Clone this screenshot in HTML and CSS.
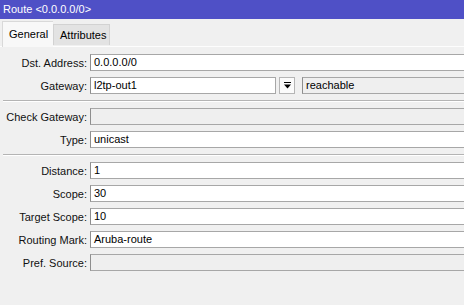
FILE: index.html
```html
<!DOCTYPE html>
<html>
<head>
<meta charset="utf-8">
<link rel="stylesheet" href="styles.css">
</head>
<body>
<div class="window">
  <div class="titlebar">Route &lt;0.0.0.0/0&gt;</div>
  <div class="tabs">
    <div class="tab active">General</div>
    <div class="tab">Attributes</div>
  </div>
  <div class="panel">
    <div class="form">
      <label class="lbl">Dst. Address:</label>
      <div class="field">0.0.0.0/0</div>

      <label class="lbl">Gateway:</label>
      <div class="gw-row">
        <div class="field gw">l2tp-out1</div>
        <div class="dd-btn">
          <svg width="7" height="7" viewBox="0 0 7 7"><rect x="0" y="0" width="7" height="1" fill="#000"/><path d="M0 2.5 H7 L3.5 6.5 Z" fill="#000"/></svg>
        </div>
        <div class="field ro">reachable</div>
      </div>

      <div class="sep"></div>

      <label class="lbl">Check Gateway:</label>
      <div class="field ro"></div>

      <label class="lbl">Type:</label>
      <div class="field">unicast</div>

      <div class="sep"></div>

      <label class="lbl">Distance:</label>
      <div class="field">1</div>

      <label class="lbl">Scope:</label>
      <div class="field">30</div>

      <label class="lbl">Target Scope:</label>
      <div class="field">10</div>

      <label class="lbl">Routing Mark:</label>
      <div class="field">Aruba-route</div>

      <label class="lbl">Pref. Source:</label>
      <div class="field ro"></div>
    </div>
  </div>
</div>
</body>
</html>
```

FILE: styles.css
```css
html, body {
  margin: 0;
  padding: 0;
  background: #f0f0f0;
  overflow: hidden;
  width: 464px;
  height: 305px;
}
.window {
  font-family: "Liberation Sans", Arial, sans-serif;
  font-size: 11px;
  color: #000;
  width: 480px;
}
.titlebar {
  height: 19px;
  line-height: 19px;
  background: #4f50c6;
  color: #fff;
  padding-left: 3px;
  font-size: 11px;
}
.tabs {
  display: flex;
  align-items: flex-end;
  height: 27px;
  padding-left: 2px;
  position: relative;
  z-index: 1;
}
.tab {
  height: 21px;
  line-height: 21px;
  padding: 0 6px;
  background: #e3e3e3;
  border: 1px solid #d2d2d2;
  border-bottom: none;
  margin-bottom: 1px;
  box-sizing: border-box;
  width: 57px;
  text-align: center;
}
.tab.active {
  height: 26px;
  line-height: 24px;
  width: 51px;
  background: #f8f8f8;
  border-color: #d9d9d9;
  margin-bottom: -1px;
  border-right: none;
}
.panel {
  border-top: 1px solid #fdfdfd;
  padding-top: 7px;
}
.form {
  display: grid;
  grid-template-columns: 87px 1fr;
  column-gap: 3px;
  row-gap: 6px;
  align-items: center;
}
.lbl {
  text-align: right;
  white-space: nowrap;
  color: #111;
}
.field {
  height: 17px;
  box-sizing: border-box;
  border: 1px solid #a7a7a7;
  border-left-color: #8e8e8e;
  background: #fff;
  padding-left: 3px;
  line-height: 15px;
  white-space: nowrap;
}
.field.ro {
  background: #efefef;
}
.gw-row {
  display: flex;
  align-items: center;
}
.field.gw {
  flex: 0 0 186px;
}
.dd-btn {
  flex: 0 0 16px;
  height: 17px;
  box-sizing: border-box;
  border: 1px solid #b5b5b5;
  background: #fbfbfb;
  margin-left: 3px;
  display: flex;
  align-items: center;
  justify-content: center;
}
.gw-row .field.ro {
  flex: 1;
  margin-left: 7px;
}
.sep {
  grid-column: 1 / -1;
  height: 0;
  border-top: 1px solid #b4b4b4;
  border-bottom: 1px solid #fff;
  margin-left: 3px;
}
```
